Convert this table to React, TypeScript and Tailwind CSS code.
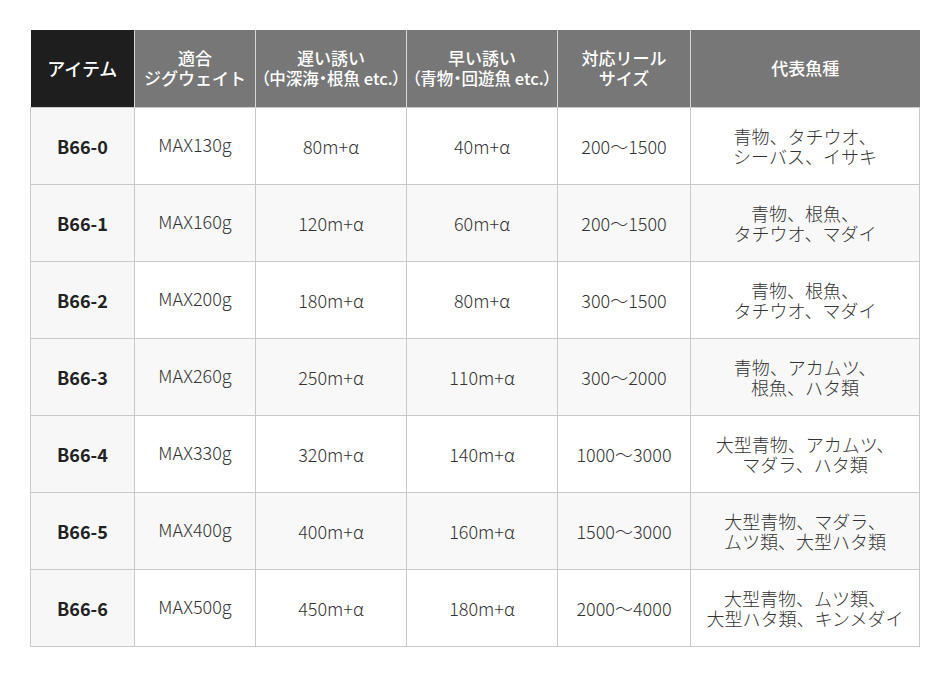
const headers = [
  ["アイテム"],
  ["適合", "ジグウェイト"],
  ["遅い誘い", "（中深海・根魚 etc.）"],
  ["早い誘い", "（青物・回遊魚 etc.）"],
  ["対応リール", "サイズ"],
  ["代表魚種"],
];

const rows = [
  ["B66-0", "MAX130g", "80m+α", "40m+α", "200〜1500", ["青物、タチウオ、", "シーバス、イサキ"]],
  ["B66-1", "MAX160g", "120m+α", "60m+α", "200〜1500", ["青物、根魚、", "タチウオ、マダイ"]],
  ["B66-2", "MAX200g", "180m+α", "80m+α", "300〜1500", ["青物、根魚、", "タチウオ、マダイ"]],
  ["B66-3", "MAX260g", "250m+α", "110m+α", "300〜2000", ["青物、アカムツ、", "根魚、ハタ類"]],
  ["B66-4", "MAX330g", "320m+α", "140m+α", "1000〜3000", ["大型青物、アカムツ、", "マダラ、ハタ類"]],
  ["B66-5", "MAX400g", "400m+α", "160m+α", "1500〜3000", ["大型青物、マダラ、", "ムツ類、大型ハタ類"]],
  ["B66-6", "MAX500g", "450m+α", "180m+α", "2000〜4000", ["大型青物、ムツ類、", "大型ハタ類、キンメダイ"]],
] as const;

const widths = ["w-[104px]", "w-[121px]", "w-[151px]", "w-[151px]", "w-[133px]", "w-[229px]"];

export default function App() {
  return (
    <div className="w-[950px] h-[677px] bg-white pt-[30px] pl-[30px] font-['Noto_Sans_CJK_JP','Noto_Sans',sans-serif]">
      <table className="table-fixed border-collapse w-[890px] text-[18px] leading-[20px] text-[#333] font-light">
        <colgroup>
          {widths.map((w, i) => (
            <col key={i} className={w} />
          ))}
        </colgroup>
        <thead>
          <tr className="h-[77px]">
            {headers.map((lines, i) => (
              <th
                key={i}
                className={
                  "font-medium text-white text-center align-middle border-x border-[#d6d6d6] first:border-l-0 last:border-r-0 " +
                  (i === 0 ? "bg-[#1e1e1e] text-[18px]" : "bg-[#777777] text-[17px]")
                }
              >
                {lines.map((l, j) => (
                  <div
                    key={j}
                    className={
                      "whitespace-nowrap " +
                      (l.startsWith("（") ? "text-[16.5px] [font-feature-settings:'palt']" : "")
                    }
                  >
                    {l}
                  </div>
                ))}
              </th>
            ))}
          </tr>
        </thead>
        <tbody>
          {rows.map((r, i) => (
            <tr key={i} className={"h-[77px] " + (i % 2 === 1 ? "bg-[#f8f8f8]" : "bg-white")}>
              <td className="bg-[#f7f7f7] border border-[#c9c9c9] text-center align-middle font-bold text-[#222]">
                {r[0]}
              </td>
              <td className="border border-[#c9c9c9] text-center align-middle pb-[4px]">{r[1]}</td>
              <td className="border border-[#c9c9c9] text-center align-middle">{r[2]}</td>
              <td className="border border-[#c9c9c9] text-center align-middle">{r[3]}</td>
              <td className="border border-[#c9c9c9] text-center align-middle">{r[4]}</td>
              <td className="border border-[#c9c9c9] text-center align-middle">
                {r[5].map((l, j) => (
                  <div key={j} className="whitespace-nowrap">{l}</div>
                ))}
              </td>
            </tr>
          ))}
        </tbody>
      </table>
    </div>
  );
}
